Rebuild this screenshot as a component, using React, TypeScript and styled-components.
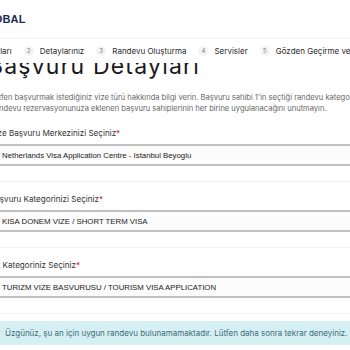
import styled, { createGlobalStyle } from 'styled-components'

const GlobalStyle = createGlobalStyle`
  html, body {
    margin: 0;
    padding: 0;
    background: #ffffff;
    font-family: Inter, 'Noto Sans', sans-serif;
    overflow: hidden;
  }
`

const Page = styled.div`
  width: 350px;
  height: 350px;
  overflow: hidden;
  display: flex;
  flex-direction: column;
`

const Header = styled.header`
  height: 38px;
  display: flex;
  align-items: center;
  border-bottom: 1px solid #f0f0f0;
  flex-shrink: 0;
`

const Logo = styled.div`
  margin-left: -22px;
  font-family: 'Liberation Sans', Arial, sans-serif;
  font-weight: 700;
  font-size: 11px;
  color: #1b2c52;
  letter-spacing: 0.2px;
`

const Stepper = styled.nav`
  height: 24px;
  display: flex;
  align-items: center;
  gap: 12px;
  margin-left: -71px;
  white-space: nowrap;
  background: #ffffff;
  position: relative;
  z-index: 2;
  flex-shrink: 0;
`

const Step = styled.div`
  display: flex;
  align-items: center;
  gap: 6px;
  font-size: 8px;
  color: #2b2b2b;
`

const StepNum = styled.span`
  width: 10px;
  height: 10px;
  border-radius: 50%;
  background: #f3f3f3;
  color: #777;
  font-size: 5.5px;
  display: flex;
  align-items: center;
  justify-content: center;
`

const Content = styled.main`
  margin-left: -10px;
  margin-right: -40px;
  display: flex;
  flex-direction: column;
`

const Title = styled.h1`
  margin: -10px 0 0 -2px;
  font-weight: 400;
  font-size: 23px;
  letter-spacing: 1.2px;
  color: #1a1a1a;
  line-height: 26px;
  white-space: nowrap;
`

const Lead = styled.p`
  margin: 13px 0 2px 0;
  font-size: 7.55px;
  line-height: 11px;
  color: #666;
  white-space: nowrap;
`

const Field = styled.section`
  padding: 12px 0 15px;
  border-bottom: 1px solid #f1f1f1;
  display: flex;
  flex-direction: column;
  gap: 6px;
`

const Label = styled.label`
  font-size: 8.1px;
  color: #333;
  white-space: nowrap;
`

const Star = styled.span`
  color: #d0021b;
`

const Select = styled.div`
  height: 18px;
  border: 1px solid #d2d2d2;
  border-top: 2px solid #c2c2c2;
  border-bottom: 2px solid #c2c2c2;
  background: #fbfbfb;
  display: flex;
  align-items: center;
  padding-left: 11px;
  font-family: 'Liberation Sans', Arial, sans-serif;
  font-size: 7.8px;
  color: #222;
  white-space: nowrap;
`

const Alert = styled.div`
  margin: 7px 30px 0 10px;
  height: 24px;
  background: #d5eff3;
  color: #3c6e78;
  font-size: 8px;
  display: flex;
  align-items: center;
  padding-left: 5px;
  white-space: nowrap;
`

const steps = [
  { n: 1, label: 'Başvuru Detayları' },
  { n: 2, label: 'Detaylarınız' },
  { n: 3, label: 'Randevu Oluşturma' },
  { n: 4, label: 'Servisler' },
  { n: 5, label: 'Gözden Geçirme ve Ödeme' },
]

const fields = [
  { label: 'Vize Başvuru Merkezinizi Seçiniz', value: 'Netherlands Visa Application Centre - Istanbul Beyoglu' },
  { label: 'Başvuru Kategorinizi Seçiniz', value: 'KISA DONEM VIZE / SHORT TERM VISA' },
  { label: 'Alt Kategoriniz Seçiniz', value: 'TURIZM VIZE BASVURUSU / TOURISM VISA APPLICATION' },
]

function App() {
  return (
    <Page>
      <GlobalStyle />
      <Header>
        <Logo>GLOBAL</Logo>
      </Header>
      <Stepper>
        {steps.map((s) => (
          <Step key={s.n}>
            <StepNum>{s.n}</StepNum>
            {s.label}
          </Step>
        ))}
      </Stepper>
      <Content>
        <Title>Başvuru Detayları</Title>
        <Lead>
          Lütfen başvurmak istediğiniz vize türü hakkında bilgi verin. Başvuru sahibi 1'in seçtiği randevu kategorisinin
          <br />
          Randevu rezervasyonunuza eklenen başvuru sahiplerinin her birine uygulanacağını unutmayın.
        </Lead>
        {fields.map((f) => (
          <Field key={f.label}>
            <Label>
              {f.label}
              <Star>*</Star>
            </Label>
            <Select>{f.value}</Select>
          </Field>
        ))}
        <Alert>Üzgünüz, şu an için uygun randevu bulunamamaktadır. Lütfen daha sonra tekrar deneyiniz.</Alert>
      </Content>
    </Page>
  )
}

export default App
